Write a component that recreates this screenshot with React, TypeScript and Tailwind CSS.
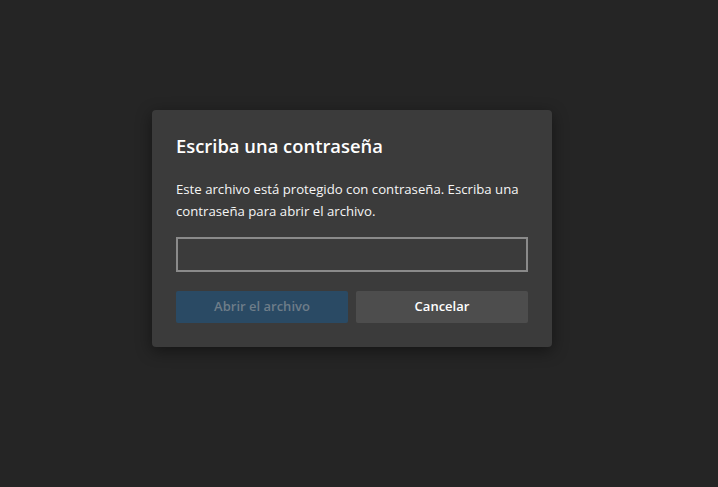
export default function App() {
  return (
    <main
      className="min-h-[487px] w-full bg-[#252525] pl-[152px] pt-[110px]"
      style={{ fontFamily: '"Segoe UI", "Open Sans", "Noto Sans", sans-serif' }}
    >
      <div className="w-[400px] rounded-[4px] bg-[#3b3b3b] px-6 pt-[23px] pb-6 shadow-[0_4px_16px_rgba(0,0,0,0.45)]">
        <h1 className="text-[18.4px] font-semibold leading-[26px] text-white">Escriba una contraseña</h1>
        <p className="mt-[19px] text-[13.2px] leading-[22px] text-[#f5f5f5]">
          Este archivo está protegido con contraseña. Escriba una contraseña para abrir el archivo.
        </p>
        <input
          type="password"
          aria-label="Contraseña"
          className="mt-[15px] block h-[35px] w-full border-2 border-[#8a8a8a] bg-[#3b3b3b] px-2 text-[14px] text-white outline-none"
        />
        <div className="mt-[19px] grid grid-cols-2 gap-2">
          <button className="h-8 rounded-[2px] bg-[#2a4a64] text-[13px] font-semibold text-[#6e7d89]">
            Abrir el archivo
          </button>
          <button className="h-8 rounded-[2px] bg-[#4d4d4d] text-[13px] font-semibold text-white">
            Cancelar
          </button>
        </div>
      </div>
    </main>
  );
}
